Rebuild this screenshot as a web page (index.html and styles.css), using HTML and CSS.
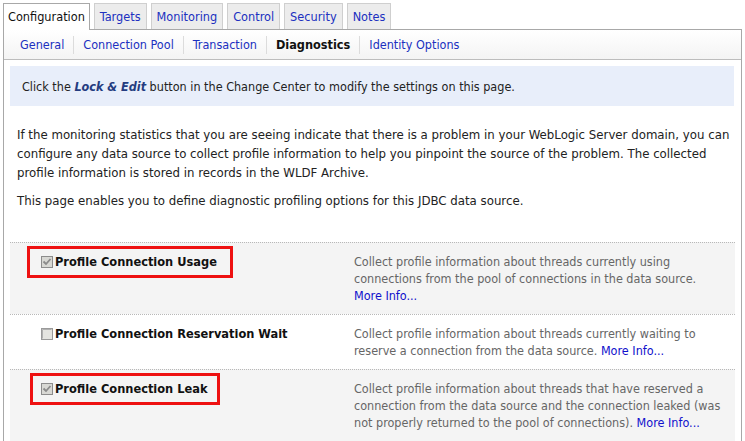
FILE: index.html
```html
<!DOCTYPE html>
<html>
<head>
<meta charset="utf-8">
<link rel="stylesheet" href="styles.css">
</head>
<body>
<div class="page">
  <div class="tabs">
    <span class="tab active">Configuration</span>
    <a class="tab">Targets</a>
    <a class="tab">Monitoring</a>
    <a class="tab">Control</a>
    <a class="tab">Security</a>
    <a class="tab">Notes</a>
  </div>
  <div class="panel">
    <div class="subtabs">
      <a class="sub">General</a>
      <a class="sub">Connection Pool</a>
      <a class="sub">Transaction</a>
      <span class="sub current">Diagnostics</span>
      <a class="sub">Identity Options</a>
    </div>
    <div class="content">
      <div class="info"><span>Click the <b><i>Lock &amp; Edit</i></b> button in the Change Center to modify the settings on this page.</span></div>
      <p class="intro">If the monitoring statistics that you are seeing indicate that there is a problem in your WebLogic Server domain, you can configure any data source to collect profile information to help you pinpoint the source of the problem. The collected profile information is stored in records in the WLDF Archive.</p>
      <p class="intro second">This page enables you to define diagnostic profiling options for this JDBC data source.</p>
      <div class="rows">
        <div class="row shaded">
          <div class="label-col">
            <span class="label hl hl-usage">
              <svg class="cb" width="12" height="12" viewBox="0 0 12 12"><rect x="0.5" y="0.5" width="11" height="11" fill="#d8d8d4" stroke="#8c8c8c"/><path d="M2.5 5.5 L5 8 L9.5 3" fill="none" stroke="#8a8a8a" stroke-width="1.8"/></svg>
              Profile Connection Usage
            </span>
          </div>
          <div class="desc">Collect profile information about threads currently using connections from the pool of connections in the data source. <a class="more">More Info...</a></div>
        </div>
        <div class="row">
          <div class="label-col">
            <span class="label">
              <svg class="cb" width="12" height="12" viewBox="0 0 12 12"><rect x="0.5" y="0.5" width="11" height="11" fill="#e4e4e0" stroke="#9a9a9a"/><path d="M1.5 10.5 V1.5 H10.5" fill="none" stroke="#b0b0b0"/></svg>
              Profile Connection Reservation Wait
            </span>
          </div>
          <div class="desc">Collect profile information about threads currently waiting to reserve a connection from the data source. <a class="more">More Info...</a></div>
        </div>
        <div class="row shaded">
          <div class="label-col">
            <span class="label hl hl-leak">
              <svg class="cb" width="12" height="12" viewBox="0 0 12 12"><rect x="0.5" y="0.5" width="11" height="11" fill="#d8d8d4" stroke="#8c8c8c"/><path d="M2.5 5.5 L5 8 L9.5 3" fill="none" stroke="#8a8a8a" stroke-width="1.8"/></svg>
              Profile Connection Leak
            </span>
          </div>
          <div class="desc">Collect profile information about threads that have reserved a connection from the data source and the connection leaked (was not properly returned to the pool of connections). <a class="more">More Info...</a></div>
        </div>
      </div>
    </div>
  </div>
</div>
</body>
</html>
```

FILE: styles.css
```css
html, body {
  margin: 0;
  padding: 0;
  background: #ffffff;
}
body {
  font-family: "DejaVu Sans Condensed", "Liberation Sans", sans-serif;
  font-size: 12px;
  color: #222;
}
.page {
  padding: 3px 3px 0 3px;
  height: 438px;
  overflow: hidden;
}
.tabs {
  display: flex;
  align-items: flex-end;
  gap: 4px;
  border-bottom: 1px solid #a8a8a8;
  height: 26px;
}
.tab {
  display: flex;
  align-items: center;
  height: 26px;
  padding: 0 5px 1px;
  background: #ececec;
  border: 1px solid #cfcfcf;
  border-bottom: none;
  color: #2030c0;
  font-size: 12.6px;
  box-sizing: border-box;
}
.tab.active {
  height: 27px;
  margin-bottom: -1px;
  background: #ffffff;
  border-color: #a8a8a8;
  color: #111;
  padding: 0 4px 2px 4px;
  font-size: 12.6px;
}
.panel {
  border: 1px solid #a8a8a8;
  border-top: none;
  height: 420px;
}
.subtabs {
  display: flex;
  align-items: center;
  height: 29px;
  padding-left: 12px;
  border-bottom: 1px solid #bdbdbd;
  background: linear-gradient(#ffffff, #f4f4f4);
}
.sub {
  color: #2030c0;
  font-size: 12.5px;
  padding: 0 9px;
  border-left: 1px solid #dcdcdc;
  line-height: 18px;
}
.sub:first-child {
  border-left: none;
  padding-left: 4px;
}
.sub.current {
  color: #111;
  font-weight: bold;
  font-size: 12.6px;
}
.content {
  padding: 6px 7px 0 6px;
}
.info {
  background: #e8eefa;
  height: 40px;
  display: flex;
  align-items: center;
  padding-left: 12px;
  font-size: 12.5px;
  color: #222;
}
.info b {
  color: #243c80;
}
.intro {
  margin: 19px -6px 0 7px;
  line-height: 19px;
  font-size: 13.1px;
  color: #222;
}
.intro.second {
  margin-top: 9px;
}
.rows {
  margin-top: 32px;
  margin-left: 0;
  margin-right: -1px;
}
.row {
  display: grid;
  grid-template-columns: 344px 1fr;
  border-top: 1px dotted #b8b8b8;
  padding: 10px 0;
  line-height: 17px;
}
.row.shaded {
  background: #f4f4f4;
}
.label-col {
  padding-left: 31px;
}
.label {
  position: relative;
  display: inline-flex;
  align-items: center;
  gap: 2px;
  font-weight: bold;
  font-size: 12.7px;
  color: #111;
}
.cb {
  flex: none;
}
.hl::after {
  content: "";
  position: absolute;
  border: 3px solid #ee1111;
  top: -7px;
  bottom: -8px;
}
.hl-usage::after {
  left: -14px;
  right: -16px;
}
.hl-leak::after {
  left: -11px;
  right: -12px;
}
.desc {
  color: #666;
  padding-right: 8px;
  font-size: 12.5px;
}
.more {
  color: #1010cc;
}
```
